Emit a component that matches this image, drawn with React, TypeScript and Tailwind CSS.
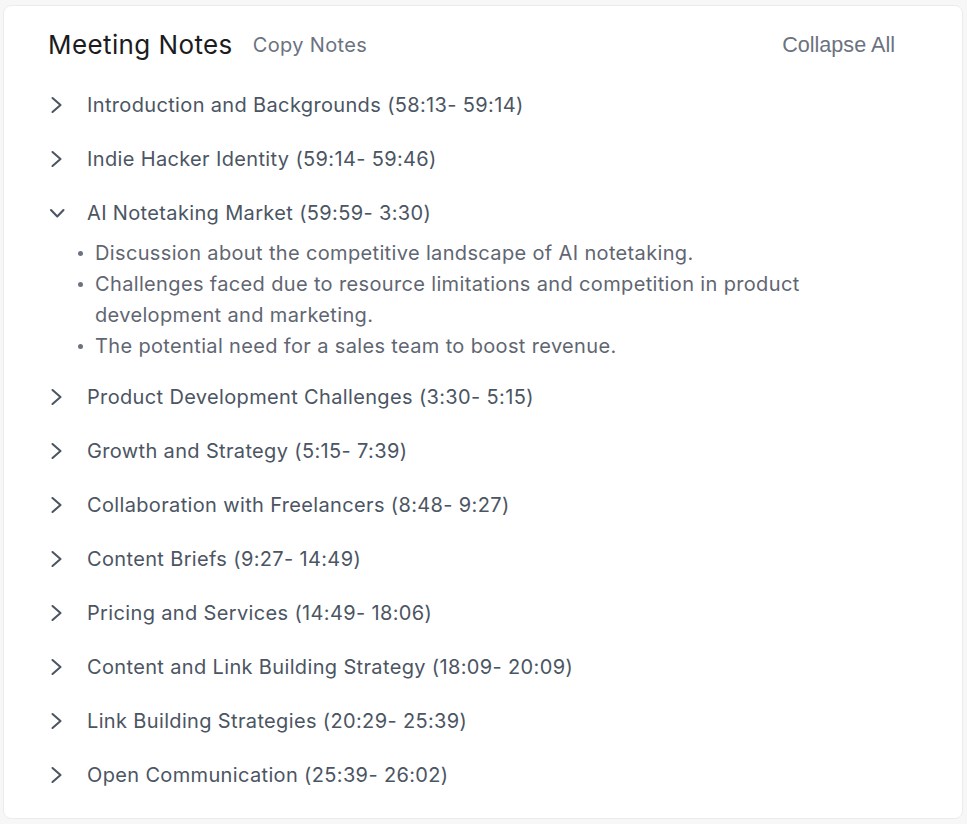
import React, { useState } from 'react'

type Section = {
  title: string
  range: string
  points?: string[]
}

const sections: Section[] = [
  { title: 'Introduction and Backgrounds', range: '(58:13- 59:14)' },
  { title: 'Indie Hacker Identity', range: '(59:14- 59:46)' },
  {
    title: 'AI Notetaking Market',
    range: '(59:59- 3:30)',
    points: [
      'Discussion about the competitive landscape of AI notetaking.',
      'Challenges faced due to resource limitations and competition in product development and marketing.',
      'The potential need for a sales team to boost revenue.',
    ],
  },
  { title: 'Product Development Challenges', range: '(3:30- 5:15)' },
  { title: 'Growth and Strategy', range: '(5:15- 7:39)' },
  { title: 'Collaboration with Freelancers', range: '(8:48- 9:27)' },
  { title: 'Content Briefs', range: '(9:27- 14:49)' },
  { title: 'Pricing and Services', range: '(14:49- 18:06)' },
  { title: 'Content and Link Building Strategy', range: '(18:09- 20:09)' },
  { title: 'Link Building Strategies', range: '(20:29- 25:39)' },
  { title: 'Open Communication', range: '(25:39- 26:02)' },
]

const Chevron = ({ open }: { open: boolean }) => (
  <svg width="20" height="20" viewBox="0 0 20 20" fill="none" className="shrink-0">
    {open ? (
      <path d="M5 7l6.25 6.5L17.5 7" stroke="#4b5563" strokeWidth="2.1" strokeLinecap="round" strokeLinejoin="round" />
    ) : (
      <path d="M6.5 3l8 7-8 7" stroke="#4b5563" strokeWidth="2.1" strokeLinecap="round" strokeLinejoin="round" />
    )}
  </svg>
)

export default function App() {
  const [open, setOpen] = useState<Record<number, boolean>>({ 2: true })

  return (
    <div className="min-h-screen bg-[#f7f7f8] pt-[5px] pl-[3px] pr-[4px] font-['Inter',sans-serif]">
      <div className="bg-white border border-[#ececee] rounded-lg pl-[44px] pr-[67px] pt-[21px] pb-[16px]">
        {/* header */}
        <div className="flex items-center h-[36px]">
          <h2 className="text-[26px] tracking-[0.4px] text-[#1c1c1e] leading-none">Meeting Notes</h2>
          <button className="ml-[20px] text-[20px] tracking-[0.35px] text-[#6b7280] leading-none">Copy Notes</button>
          <button
            className="ml-auto text-[21.6px] text-[#6b7280] leading-none font-['Liberation_Sans',sans-serif]"
            onClick={() => setOpen({})}
          >
            Collapse All
          </button>
        </div>

        <div className="mt-[15px]">
          {sections.map((s, i) => {
            const isOpen = !!open[i] && !!s.points
            return (
              <div key={s.title} className={isOpen ? 'pb-[8px]' : ''}>
                <button
                  className="flex items-center h-[54px] w-full text-left"
                  onClick={() => setOpen({ ...open, [i]: !open[i] })}
                >
                  <span className="ml-[-2px]">
                    <Chevron open={isOpen} />
                  </span>
                  <span className="ml-[21px] text-[20px] tracking-[0.35px] text-[#4b5563]">
                    {s.title} {s.range}
                  </span>
                </button>
                {isOpen && (
                  <ul className="mt-[-2px]">
                    {s.points!.map((p) => (
                      <li key={p} className="flex text-[20px] tracking-[0.35px] leading-[31px] text-[#5f6672]">
                        <span className="mt-[13px] ml-[30px] w-[5px] h-[5px] rounded-full bg-[#6b7280] shrink-0" />
                        <span className="ml-[12px]">{p}</span>
                      </li>
                    ))}
                  </ul>
                )}
              </div>
            )
          })}
        </div>
      </div>
    </div>
  )
}
